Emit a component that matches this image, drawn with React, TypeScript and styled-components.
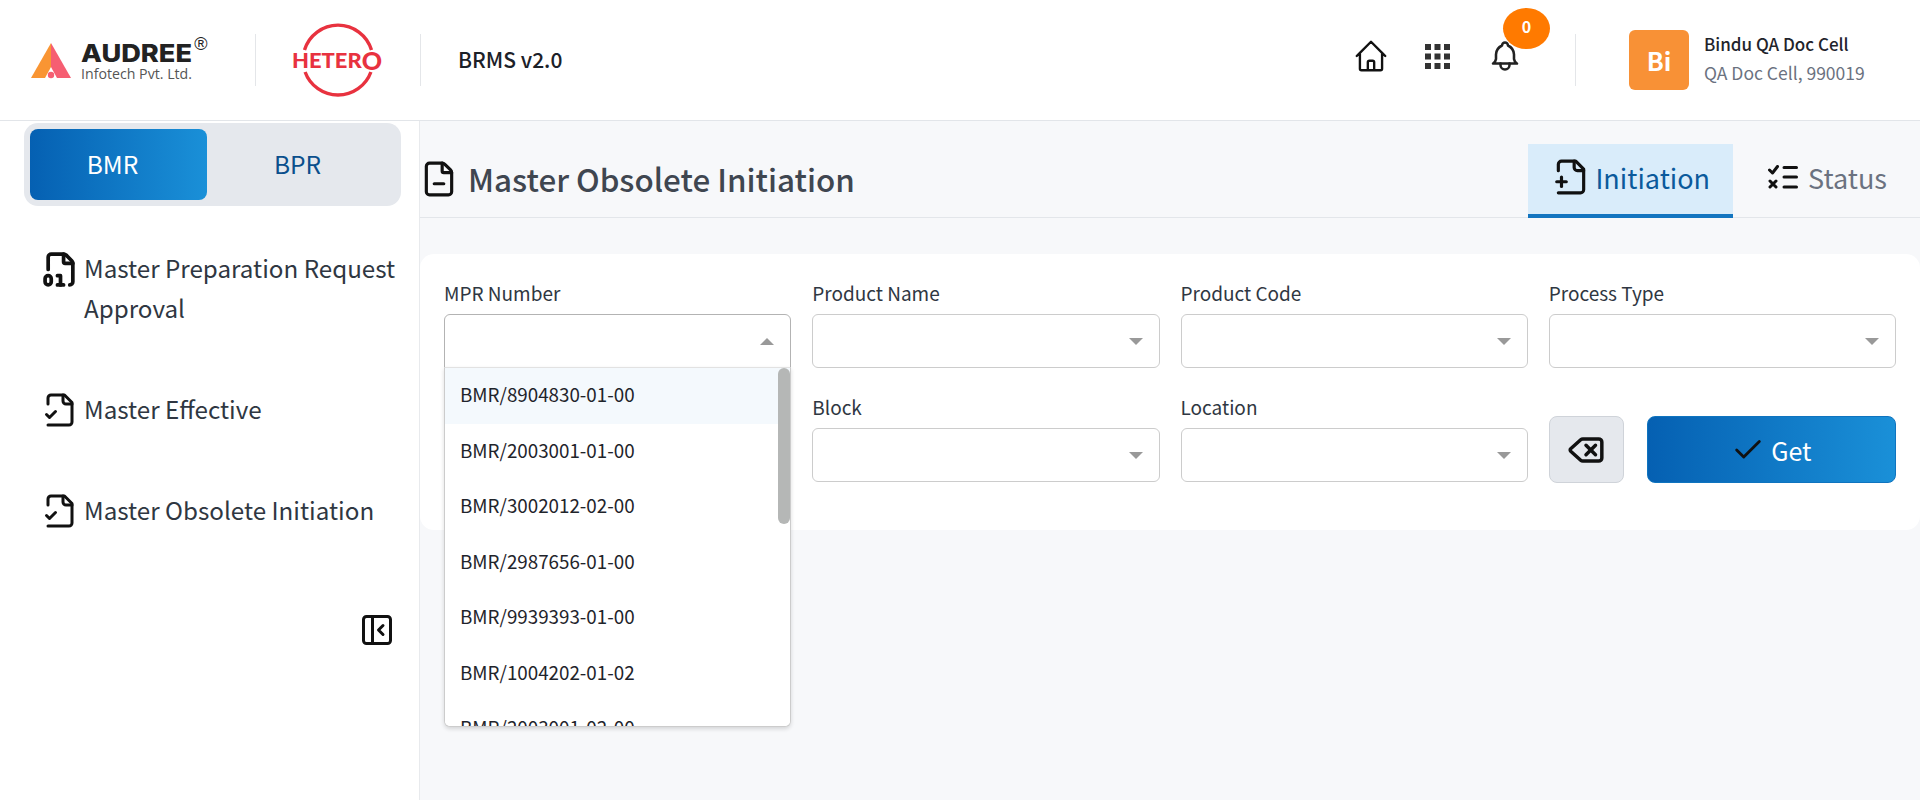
import React from "react";
import styled, { createGlobalStyle } from "styled-components";
import { Check, Delete, FileDigit, FileMinus, PanelLeftClose } from "lucide-react";

const Global = createGlobalStyle`
  html, body { margin: 0; padding: 0; background: #fff; }
  body { font-family: "Noto Sans CJK JP", "Noto Sans", sans-serif; color: #222; }
  * { box-sizing: border-box; }
`;

const Page = styled.div`
  width: 1920px;
  height: 800px;
  overflow: hidden;
  display: flex;
  flex-direction: column;
`;

const Header = styled.header`
  height: 121px;
  flex: none;
  display: flex;
  align-items: center;
  background: #fff;
  border-bottom: 1px solid #e2e5e9;
`;

const LogoSlot = styled.div<{ $w: number; $pad?: number }>`
  width: ${(p) => p.$w}px;
  padding-left: ${(p) => p.$pad ?? 0}px;
  height: 100%;
  display: flex;
  align-items: center;
  flex: none;
`;

const VDivider = styled.div<{ $ml?: number }>`
  width: 1px;
  height: 52px;
  margin-left: ${(p) => p.$ml ?? 0}px;
  background: #e4e6e9;
  flex: none;
`;

const AppName = styled.div`
  margin: 0 0 3px 37px;
  font-size: 21px;
  font-weight: 500;
  line-height: 30px;
  color: #1c2128;
`;

const HeaderRight = styled.div`
  margin-left: auto;
  display: flex;
  align-items: center;
  height: 100%;
`;

const IconSlot = styled.div<{ $w: number; $ml?: number }>`
  position: relative;
  width: ${(p) => p.$w}px;
  margin-left: ${(p) => p.$ml ?? 0}px;
  margin-bottom: 8px;
  display: flex;
  justify-content: center;
  align-items: center;
  color: #111;
`;

const Badge = styled.span`
  position: absolute;
  left: 16px;
  top: -29px;
  width: 47px;
  height: 41px;
  border-radius: 50%;
  background: #ff7a00;
  color: #fff;
  font-size: 16px;
  font-weight: 700;
  line-height: 36px;
  text-align: center;
`;

const Avatar = styled.div`
  width: 60px;
  height: 60px;
  border-radius: 6px;
  background: #f89136;
  color: #fff;
  font-size: 25px;
  font-weight: 700;
  display: flex;
  align-items: center;
  justify-content: center;
  margin-left: 53px;
`;

const UserBlock = styled.div`
  margin: 0 0 4px 15px;
  width: 216px;
  display: flex;
  flex-direction: column;
  gap: 1px;
`;

const UserName = styled.div`
  font-size: 17px;
  font-weight: 500;
  line-height: 28px;
  color: #1f242b;
`;

const UserSub = styled.div`
  font-size: 17.5px;
  line-height: 28px;
  color: #6b7280;
`;

const Body = styled.div`
  flex: 1;
  display: flex;
  min-height: 0;
`;

const Sidebar = styled.aside`
  width: 420px;
  flex: none;
  background: #fff;
  border-right: 1px solid #e8eaed;
  display: flex;
  flex-direction: column;
`;

const ModeToggle = styled.div`
  margin: 2px 0 0 24px;
  width: 377px;
  height: 83px;
  padding: 6px;
  border-radius: 14px;
  background: #e5e8ed;
  display: flex;
`;

const ModeActive = styled.div`
  width: 177px;
  height: 71px;
  flex: none;
  padding: 0 12px 2px 0;
  border-radius: 8px;
  display: flex;
  align-items: center;
  justify-content: center;
  font-size: 24.5px;
  color: #fff;
  background: linear-gradient(90deg, #0560b2, #1a90d8);
`;

const ModeIdle = styled.div`
  flex: 1;
  height: 71px;
  padding: 0 7px 2px 0;
  display: flex;
  align-items: center;
  justify-content: center;
  font-size: 24.5px;
  color: #0b4f8c;
`;

const Nav = styled.nav`
  margin: 42px 0 0 42px;
  display: flex;
  flex-direction: column;
  gap: 61px;
`;

const NavItem = styled.div`
  display: flex;
  align-items: flex-start;
  gap: 6px;
  color: #2f3742;
  font-size: 24.2px;
  line-height: 40px;
  width: 365px;
  svg { flex: none; margin-top: 3px; color: #111; }
`;

const CollapseRow = styled.div`
  margin: 82px 24px 0 0;
  display: flex;
  justify-content: flex-end;
  color: #111;
`;

const Main = styled.main`
  flex: 1;
  background: #f7f8fa;
  display: flex;
  flex-direction: column;
`;

const TitleBar = styled.div`
  height: 97px;
  flex: none;
  display: flex;
  align-items: flex-end;
  justify-content: space-between;
  border-bottom: 1px solid #e3e6ea;
  padding-right: 10px;
`;

const Title = styled.h1`
  margin: 0 0 13px;
  display: flex;
  align-items: center;
  gap: 10px;
  font-size: 31.4px;
  font-weight: 500;
  line-height: 50px;
  color: #3f4650;
  svg { color: #111; }
`;

const Tabs = styled.div`
  display: flex;
  gap: 11px;
`;

const Tab = styled.div<{ $active?: boolean }>`
  height: 74px;
  padding: 0 23px 4px 24px;
  display: flex;
  align-items: center;
  gap: ${(p) => (p.$active ? 5 : 10)}px;
  font-size: 27px;
  color: ${(p) => (p.$active ? "#0b5a9c" : "#6b7280")};
  background: ${(p) => (p.$active ? "#d9ecfa" : "transparent")};
  border-bottom: 4px solid ${(p) => (p.$active ? "#1375c0" : "transparent")};
  margin-bottom: -1px;
  svg { color: #111; }
`;

const Card = styled.section`
  margin-top: 36px;
  height: 276px;
  background: #fff;
  border-radius: 14px;
  padding: 24px 24px 0 24px;
  display: grid;
  grid-template-columns: repeat(4, 1fr);
  column-gap: 21px;
  row-gap: 24px;
  align-content: start;
`;

const Field = styled.div`
  position: relative;
  display: flex;
  flex-direction: column;
  gap: 4px;
  min-width: 0;
`;

const Label = styled.label`
  height: 32px;
  font-size: 19px;
  line-height: 30px;
  color: #2f3742;
`;

const Control = styled.div<{ $open?: boolean }>`
  height: 54px;
  background: #fff;
  border: 1px solid ${(p) => (p.$open ? "#b3b3b3" : "#cccccc")};
  border-radius: ${(p) => (p.$open ? "6px 6px 0 0" : "6px")};
  position: relative;
`;

const Arrow = styled.span<{ $up?: boolean }>`
  position: absolute;
  right: 16px;
  top: 23px;
  width: 0;
  height: 0;
  border-left: 7px solid transparent;
  border-right: 7px solid transparent;
  ${(p) => (p.$up ? "border-bottom: 7px solid #999;" : "border-top: 7px solid #999;")}
`;

const Menu = styled.div`
  position: absolute;
  left: 0;
  right: 0;
  top: 89px;
  height: 360px;
  background: #fff;
  border: 1px solid #cccccc;
  border-top-color: #e2e2e2;
  border-radius: 0 0 6px 6px;
  box-shadow: 0 2px 4px rgba(0, 0, 0, 0.14);
  overflow: hidden;
  z-index: 5;
`;

const MenuItem = styled.div<{ $hover?: boolean }>`
  height: 55.5px;
  padding: 0 0 4px 15px;
  display: flex;
  align-items: center;
  font-size: 18.8px;
  color: #1f242b;
  background: ${(p) => (p.$hover ? "#f4f9fd" : "#fff")};
`;

const Thumb = styled.div`
  position: absolute;
  right: 0;
  top: 0;
  width: 12px;
  height: 156px;
  border-radius: 6px;
  background: #b5b7b6;
`;

const ActionCell = styled.div`
  align-self: end;
  display: flex;
  gap: 23px;
  height: 67px;
  margin-bottom: -1px;
`;

const ResetButton = styled.button`
  width: 75px;
  height: 67px;
  padding: 0;
  border: 1px solid #cfd3d9;
  border-radius: 8px;
  background: #e5e8ed;
  color: #111;
  display: flex;
  align-items: center;
  justify-content: center;
`;

const GetButton = styled.button`
  flex: 1;
  height: 67px;
  border: 1px solid #0f74bf;
  border-radius: 8px;
  background: linear-gradient(90deg, #0560b2, #1a90d8);
  color: #fff;
  font-family: inherit;
  font-size: 25px;
  display: flex;
  align-items: center;
  justify-content: center;
  gap: 6px;
  svg { color: #111; }
`;

const AudreeLogo = () => (
  <svg width="190" height="60" viewBox="0 0 190 60" style={{ marginLeft: 31 }}>
    <polygon points="20,13 0,48 14,48 20,37" fill="#f99533" />
    <polygon points="20,13 40,48 26,48 20,37" fill="#f65e72" />
    <circle cx="20" cy="45" r="3.2" fill="#f65e72" />
    <text x="50" y="32" fontFamily="Inter" fontWeight="800" fontSize="24.5" fill="#222" textLength="111" lengthAdjust="spacingAndGlyphs">
      AUDREE
    </text>
    <text x="50" y="49" fontFamily="Open Sans" fontSize="14" fill="#555" textLength="111" lengthAdjust="spacingAndGlyphs">
      Infotech Pvt. Ltd.
    </text>
    <text x="170" y="20" textAnchor="middle" fontFamily="Liberation Sans" fontSize="18" fill="#222">
      ®
    </text>
  </svg>
);

const HeteroLogo = () => (
  <svg width="100" height="80" viewBox="0 0 100 80">
    <path d="M13.5 30 A35 35 0 0 1 80.5 30" fill="none" stroke="#e8323f" strokeWidth="3.4" />
    <path d="M79.9 52 A35 35 0 0 1 14.1 52" fill="none" stroke="#e8323f" strokeWidth="3.4" />
    <text x="1" y="48" fontFamily="Lato" fontWeight="900" fontSize="21" fill="#e8323f" textLength="90" lengthAdjust="spacingAndGlyphs">
      HETER<tspan fontSize="24" dy="1.5">O</tspan>
    </text>
  </svg>
);

const HomeIcon = () => (
  <svg width="38" height="38" viewBox="0 0 24 24" fill="none" stroke="currentColor" strokeWidth="1.5" strokeLinecap="round" strokeLinejoin="round">
    <path d="M3 12l2-2m0 0l7-7 7 7M5 10v10a1 1 0 001 1h3m10-11l2 2m-2-2v10a1 1 0 01-1 1h-3m-6 0a1 1 0 001-1v-4a1 1 0 011-1h2a1 1 0 011 1v4a1 1 0 001 1m-6 0h6" />
  </svg>
);

const GridIcon = () => (
  <svg width="25" height="25" viewBox="0 0 25 25" fill="#333">
    {[0, 9.5, 19].flatMap((y) =>
      [0, 9.5, 19].map((x) => <rect key={`${x}-${y}`} x={x} y={y} width="6" height="6" />)
    )}
  </svg>
);

const BellIcon = () => (
  <svg width="38" height="38" viewBox="0 0 24 24" fill="none" stroke="#222" strokeWidth="1.7" strokeLinecap="round" strokeLinejoin="round">
    <path d="M10 5a2 2 0 1 1 4 0a7 7 0 0 1 4 6v3a4 4 0 0 0 2 3h-16a4 4 0 0 0 2 -3v-3a7 7 0 0 1 4 -6" />
    <path d="M9 17v1a3 3 0 0 0 6 0v-1" />
  </svg>
);

const StatusIcon = () => (
  <svg width="30" height="24" viewBox="0 0 30 24" fill="none" stroke="#111" strokeWidth="3" strokeLinecap="round" strokeLinejoin="round" style={{ flex: "none" }}>
    <path d="M1.5 5l3 3 5-6.5" />
    <path d="M2 16l6 6M8 16l-6 6" />
    <path d="M16 2.5h12.5M16 12h12.5M16 22h12.5" />
  </svg>
);

const FileBase = ({ size, stroke = 2, children }: { size: number; stroke?: number; children: React.ReactNode }) => (
  <svg width={size} height={size} viewBox="0 0 24 24" fill="none" stroke="currentColor" strokeWidth={stroke} strokeLinecap="round" strokeLinejoin="round" style={{ flex: "none" }}>
    <path d="M4 22h14a2 2 0 0 0 2-2V7l-5-5H6a2 2 0 0 0-2 2v4" />
    <path d="M14 2v4a2 2 0 0 0 2 2h4" />
    {children}
  </svg>
);

const FileCheckIcon = () => (
  <FileBase size={36}>
    <path d="m3 15 2 2 4-4" />
  </FileBase>
);

const FilePlusIcon = () => (
  <FileBase size={38}>
    <path d="M3 15h6" />
    <path d="M6 12v6" />
  </FileBase>
);

const Select = ({ label }: { label: string }) => (
  <Field>
    <Label>{label}</Label>
    <Control>
      <Arrow />
    </Control>
  </Field>
);

const options = [
  "BMR/8904830-01-00",
  "BMR/2003001-01-00",
  "BMR/3002012-02-00",
  "BMR/2987656-01-00",
  "BMR/9939393-01-00",
  "BMR/1004202-01-02",
  "BMR/2003001-02-00",
];

export default function App() {
  return (
    <Page>
      <Global />
      <Header>
        <LogoSlot $w={255}>
          <AudreeLogo />
        </LogoSlot>
        <VDivider />
        <LogoSlot $w={164} $pad={35}>
          <HeteroLogo />
        </LogoSlot>
        <VDivider />
        <AppName>BRMS v2.0</AppName>
        <HeaderRight>
          <IconSlot $w={38}>
            <HomeIcon />
          </IconSlot>
          <IconSlot $w={25} $ml={35}>
            <GridIcon />
          </IconSlot>
          <IconSlot $w={36} $ml={37}>
            <BellIcon />
            <Badge>0</Badge>
          </IconSlot>
          <VDivider $ml={52} />
          <Avatar>Bi</Avatar>
          <UserBlock>
            <UserName>Bindu QA Doc Cell</UserName>
            <UserSub>QA Doc Cell, 990019</UserSub>
          </UserBlock>
        </HeaderRight>
      </Header>
      <Body>
        <Sidebar>
          <ModeToggle>
            <ModeActive>BMR</ModeActive>
            <ModeIdle>BPR</ModeIdle>
          </ModeToggle>
          <Nav>
            <NavItem>
              <FileDigit size={37} strokeWidth={2.4} style={{ marginRight: -1 }} />
              <span>Master Preparation Request Approval</span>
            </NavItem>
            <NavItem>
              <FileCheckIcon />
              <span>Master Effective</span>
            </NavItem>
            <NavItem>
              <FileCheckIcon />
              <span>Master Obsolete Initiation</span>
            </NavItem>
          </Nav>
          <CollapseRow>
            <PanelLeftClose size={36} strokeWidth={2} />
          </CollapseRow>
        </Sidebar>
        <Main>
          <TitleBar>
            <Title>
              <FileMinus size={38} strokeWidth={2} />
              Master Obsolete Initiation
            </Title>
            <Tabs>
              <Tab $active>
                <FilePlusIcon />
                Initiation
              </Tab>
              <Tab>
                <StatusIcon />
                Status
              </Tab>
            </Tabs>
          </TitleBar>
          <Card>
            <Field>
              <Label>MPR Number</Label>
              <Control $open>
                <Arrow $up />
              </Control>
              <Menu>
                {options.map((o, i) => (
                  <MenuItem key={o} $hover={i === 0}>
                    {o}
                  </MenuItem>
                ))}
                <Thumb />
              </Menu>
            </Field>
            <Select label="Product Name" />
            <Select label="Product Code" />
            <Select label="Process Type" />
            <div />
            <Select label="Block" />
            <Select label="Location" />
            <ActionCell>
              <ResetButton>
                <Delete size={38} strokeWidth={2.2} />
              </ResetButton>
              <GetButton>
                <Check size={34} strokeWidth={2} />
                Get
              </GetButton>
            </ActionCell>
          </Card>
        </Main>
      </Body>
    </Page>
  );
}
